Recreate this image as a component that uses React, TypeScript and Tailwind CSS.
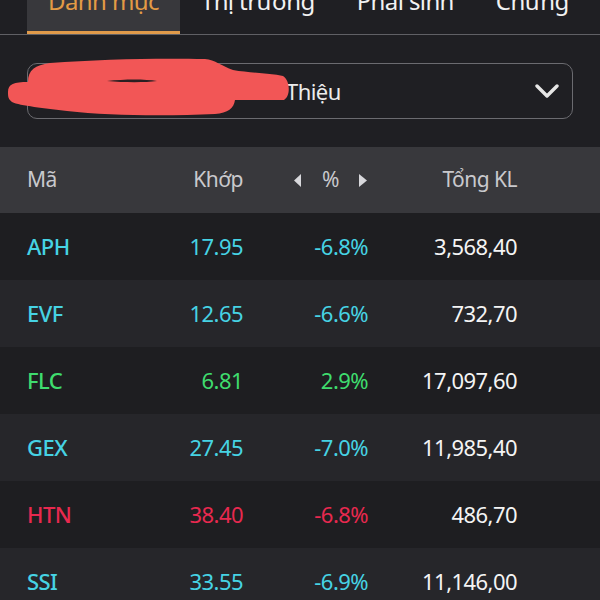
type Row = {
  code: string;
  price: string;
  pct: string;
  vol: string;
  tone: 'down' | 'up' | 'floor';
};

const rows: Row[] = [
  { code: 'APH', price: '17.95', pct: '-6.8%', vol: '3,568,40', tone: 'floor' },
  { code: 'EVF', price: '12.65', pct: '-6.6%', vol: '732,70', tone: 'floor' },
  { code: 'FLC', price: '6.81', pct: '2.9%', vol: '17,097,60', tone: 'up' },
  { code: 'GEX', price: '27.45', pct: '-7.0%', vol: '11,985,40', tone: 'floor' },
  { code: 'HTN', price: '38.40', pct: '-6.8%', vol: '486,70', tone: 'down' },
  { code: 'SSI', price: '33.55', pct: '-6.9%', vol: '11,146,00', tone: 'floor' },
];

const toneClass = {
  floor: 'text-[#46d3e4]',
  up: 'text-[#3fdc6e]',
  down: 'text-[#e8294f]',
};

const tabs = ['Danh mục', 'Thị trường', 'Phái sinh', 'Chứng'];

export default function App() {
  return (
    <div
      className="w-[600px] h-[600px] overflow-hidden bg-[#1f1f23] text-[#f2f2f2]"
      style={{ fontFamily: '"Noto Sans", "DejaVu Sans", sans-serif' }}
    >
      {/* tabs, top cut off by the screenshot */}
      <div className="h-[35px] border-b border-[#606065] flex pl-[27px] overflow-hidden">
        {tabs.map((t, i) => (
          <div
            key={t}
            className={
              i === 0
                ? 'h-[34px] px-[21px] bg-[#38383c] border-b-[3px] border-[#e09a4a] text-[#e39b45] whitespace-nowrap'
                : 'h-[34px] px-[21px] text-[#f2f2f2] whitespace-nowrap'
            }
          >
            <div className="text-[24px] leading-[24px] -mt-[11px] tracking-tight">{t}</div>
          </div>
        ))}
      </div>

      {/* selector */}
      <div className="px-[27px] pt-[28px] pb-[28px]">
        <div className="relative h-[56px] rounded-[10px] border border-[#6b6b70] flex items-center pl-[258px] pr-[13px]">
          <span className="text-[22px] text-[#ececec] tracking-tight">Thiệu</span>
          <svg className="ml-auto" width="24" height="15" viewBox="0 0 24 15">
            <polyline
              points="2,2 12,12 22,2"
              fill="none"
              stroke="#e6e6e6"
              strokeWidth="3.4"
              strokeLinecap="round"
              strokeLinejoin="round"
            />
          </svg>
          {/* redaction scribble */}
          <svg className="absolute -left-[28px] -top-[64px]" width="300" height="130" viewBox="0 0 300 130">
            <path
              d="M8,92 C8,84 14,82 28,82 C28,70 35,65 50,63 C100,59 160,58 205,59 C215,60 222,66 233,70 C250,73 270,73 283,76 C290,80 291,96 284,100 L235,100 C234,108 228,113 215,114 C170,116 110,116 67,111 C45,108 20,106 12,102 C8,99 8,96 8,92 Z"
              fill="#f25656"
            />
            <path d="M107,81 C125,79 145,79 157,81 C145,82.6 125,82.6 107,81 Z" fill="#2a1f22" />
          </svg>
        </div>
      </div>

      {/* header */}
      <div className="h-[66px] bg-[#38383c] flex items-center text-[21px] text-[#c9c9cd] tracking-tight">
        <div className="w-[170px] pl-[27px]">Mã</div>
        <div className="w-[73px] text-right">Khớp</div>
        <div className="w-[125px] flex items-center justify-end">
          <svg width="7" height="13" viewBox="0 0 7 13">
            <path d="M7,0 L0,6.5 L7,13 Z" fill="#d8d8dc" />
          </svg>
          <span className="ml-[21px] mr-[20px]">%</span>
          <svg width="8" height="13" viewBox="0 0 8 13" className="mr-[1px]">
            <path d="M0,0 L8,6.5 L0,13 Z" fill="#d8d8dc" />
          </svg>
        </div>
        <div className="w-[149px] text-right">Tổng KL</div>
      </div>

      {/* rows */}
      {rows.map((r, i) => (
        <div
          key={r.code}
          className={
            'h-[67px] flex items-center text-[22px] tracking-tight ' +
            (i % 2 === 0 ? 'bg-[#1e1e21]' : 'bg-[#26262a]')
          }
        >
          <div className={'w-[170px] pl-[27px] font-medium ' + toneClass[r.tone]}>{r.code}</div>
          <div className={'w-[73px] text-right ' + toneClass[r.tone]}>{r.price}</div>
          <div className={'w-[125px] text-right ' + toneClass[r.tone]}>{r.pct}</div>
          <div className="w-[149px] text-right text-[#f4f4f4]">{r.vol}</div>
        </div>
      ))}
    </div>
  );
}
